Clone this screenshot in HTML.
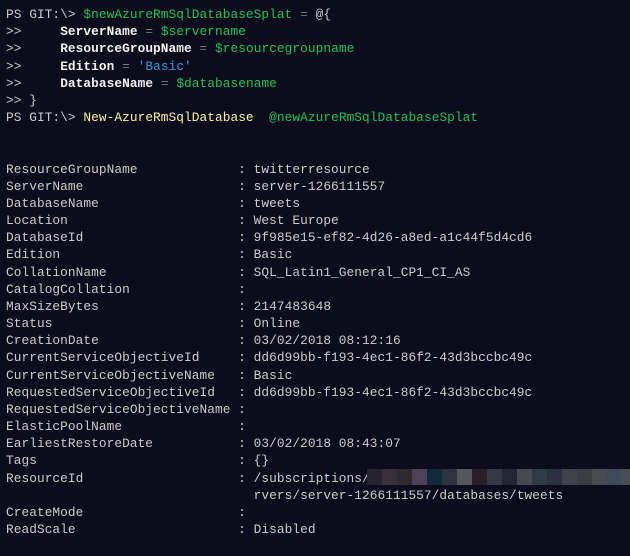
<!DOCTYPE html>
<html><head><meta charset="utf-8"><style>
html,body{margin:0;padding:0;background:#0c0c1c;width:630px;height:556px;overflow:hidden}
pre{margin:0;position:absolute;left:6px;top:6px;font-family:"Liberation Mono",monospace;font-size:12.8px;letter-spacing:0.06px;line-height:17.17px;color:#cccccc;white-space:pre}
.g{color:#1cc45a}.d{color:#767676}.b{color:#3a96dd}.y{color:#f9f1a5}.w{color:#f2f2f2;font-weight:bold}
.blur{position:absolute;top:469px;left:367px;height:16px;display:flex}
.blur span{display:block;width:15px;height:16px}
</style></head><body>
<pre>PS GIT:\&gt; <span class="g">$newAzureRmSqlDatabaseSplat</span> <span class="d">=</span> @{
&gt;&gt;     <span class="w">ServerName</span> <span class="d">=</span> <span class="g">$servername</span>
&gt;&gt;     <span class="w">ResourceGroupName</span> <span class="d">=</span> <span class="g">$resourcegroupname</span>
&gt;&gt;     <span class="w">Edition</span> <span class="d">=</span> <span class="b">'Basic'</span>
&gt;&gt;     <span class="w">DatabaseName</span> <span class="d">=</span> <span class="g">$databasename</span>
&gt;&gt; }
PS GIT:\&gt; <span class="y">New-AzureRmSqlDatabase</span>  <span class="g">@newAzureRmSqlDatabaseSplat</span>


ResourceGroupName             : twitterresource
ServerName                    : server-1266111557
DatabaseName                  : tweets
Location                      : West Europe
DatabaseId                    : 9f985e15-ef82-4d26-a8ed-a1c44f5d4cd6
Edition                       : Basic
CollationName                 : SQL_Latin1_General_CP1_CI_AS
CatalogCollation              :
MaxSizeBytes                  : 2147483648
Status                        : Online
CreationDate                  : 03/02/2018 08:12:16
CurrentServiceObjectiveId     : dd6d99bb-f193-4ec1-86f2-43d3bccbc49c
CurrentServiceObjectiveName   : Basic
RequestedServiceObjectiveId   : dd6d99bb-f193-4ec1-86f2-43d3bccbc49c
RequestedServiceObjectiveName :
ElasticPoolName               :
EarliestRestoreDate           : 03/02/2018 08:43:07
Tags                          : {}
ResourceId                    : /subscriptions/
                                rvers/server-1266111557/databases/tweets
CreateMode                    :
ReadScale                     : Disabled</pre>
<div class="blur">
<span style="background:#26252f"></span><span style="background:#3a2f3a"></span><span style="background:#2e2a2e"></span><span style="background:#4e4158"></span><span style="background:#0f2a3a"></span><span style="background:#2f3340"></span><span style="background:#55555e"></span><span style="background:#2a1e28"></span><span style="background:#343945"></span><span style="background:#232633"></span><span style="background:#474a52"></span><span style="background:#2f3c48"></span><span style="background:#2a3040"></span><span style="background:#3f414b"></span><span style="background:#3a3c44"></span><span style="background:#4a4b52"></span><span style="background:#3d4a5c"></span><span style="background:#4a4d55"></span>
</div>
</body></html>
